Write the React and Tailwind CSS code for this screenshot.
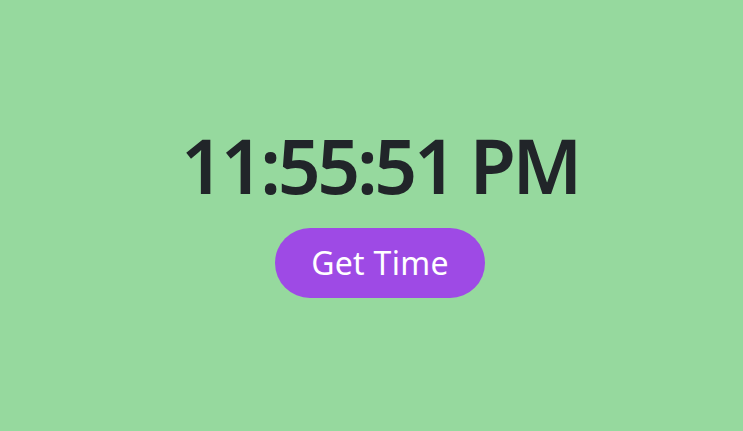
export default function App() {
  return (
    <div className="min-h-screen w-full bg-[#96d99e] flex flex-col items-center justify-center pl-[17px] pb-[14px]" style={{ fontFamily: '"Noto Sans", "Open Sans", sans-serif' }}>
      <div className="text-[75px] leading-[1.2] font-semibold tracking-[-3.3px] text-[#212529]">11:55:51 PM</div>
      <button className="mt-[18px] w-[210px] h-[70px] rounded-full bg-[#9e4ae5] text-white text-[32px] tracking-[0.3px] flex items-center justify-center">
        Get Time
      </button>
    </div>
  );
}
